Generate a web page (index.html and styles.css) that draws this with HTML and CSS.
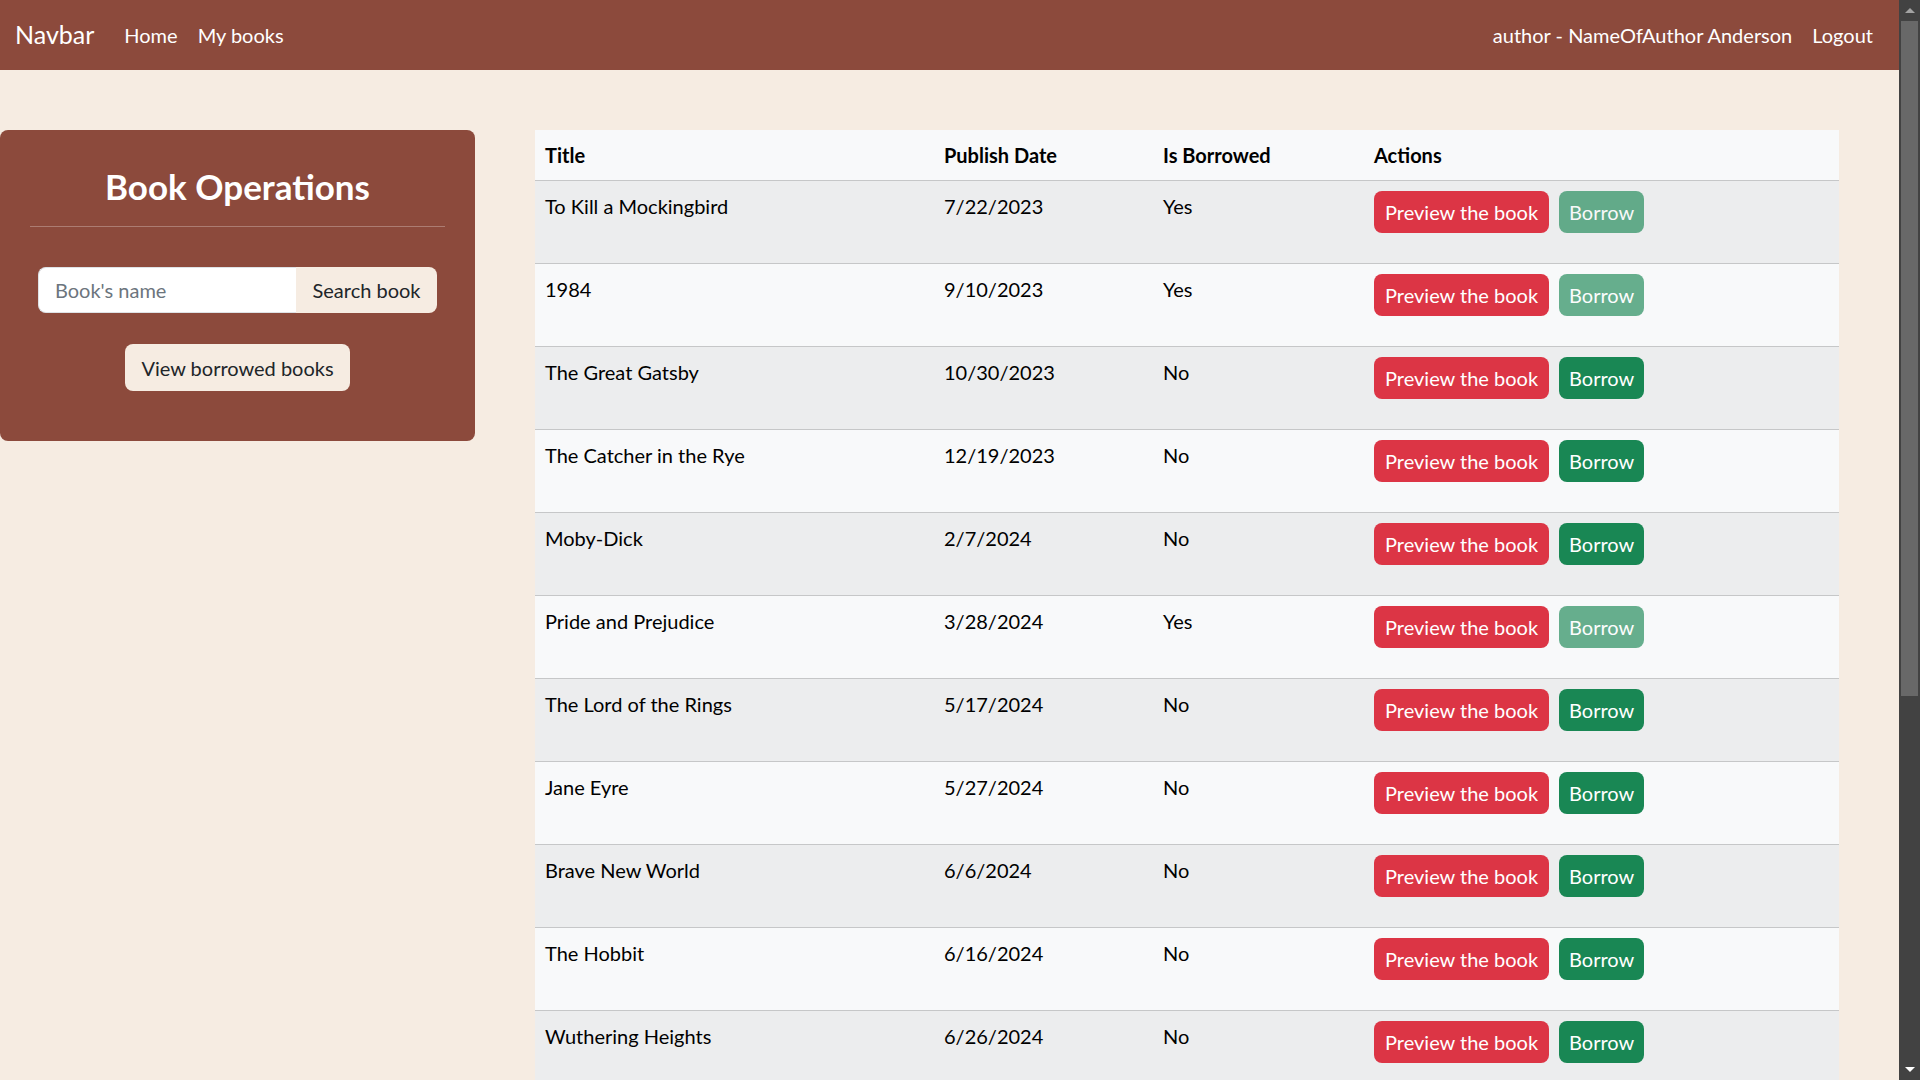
FILE: index.html
```html
<!DOCTYPE html>
<html lang="en">
<head>
<meta charset="utf-8">
<title>Books</title>
<link rel="stylesheet" href="styles.css">
</head>
<body>
<div class="page">
  <nav class="navbar">
    <a class="brand" href="#">Navbar</a>
    <ul class="nav-left">
      <li><a class="nav-link" href="#">Home</a></li>
      <li><a class="nav-link" href="#">My books</a></li>
    </ul>
    <ul class="nav-right">
      <li><span class="nav-link">author - NameOfAuthor Anderson</span></li>
      <li><a class="nav-link" href="#">Logout</a></li>
    </ul>
  </nav>
  <main class="layout">
    <aside class="side">
      <div class="ops-card">
        <h3 class="ops-title">Book Operations</h3>
        <hr class="ops-rule">
        <form class="search-group">
          <input class="search-input" type="text" placeholder="Book's name">
          <button class="search-btn" type="button">Search book</button>
        </form>
        <div class="center-row">
          <button class="light-btn" type="button">View borrowed books</button>
        </div>
      </div>
    </aside>
    <section class="content">
      <table class="books">
        <thead>
          <tr>
            <th class="c-title">Title</th>
            <th class="c-date">Publish Date</th>
            <th class="c-borrowed">Is Borrowed</th>
            <th class="c-actions">Actions</th>
          </tr>
        </thead>
        <tbody>
          <tr><td>To Kill a Mockingbird</td><td>7/22/2023</td><td>Yes</td><td><div class="actions"><button class="btn btn-danger">Preview the book</button><button class="btn btn-success" disabled>Borrow</button></div></td></tr>
          <tr><td>1984</td><td>9/10/2023</td><td>Yes</td><td><div class="actions"><button class="btn btn-danger">Preview the book</button><button class="btn btn-success" disabled>Borrow</button></div></td></tr>
          <tr><td>The Great Gatsby</td><td>10/30/2023</td><td>No</td><td><div class="actions"><button class="btn btn-danger">Preview the book</button><button class="btn btn-success">Borrow</button></div></td></tr>
          <tr><td>The Catcher in the Rye</td><td>12/19/2023</td><td>No</td><td><div class="actions"><button class="btn btn-danger">Preview the book</button><button class="btn btn-success">Borrow</button></div></td></tr>
          <tr><td>Moby-Dick</td><td>2/7/2024</td><td>No</td><td><div class="actions"><button class="btn btn-danger">Preview the book</button><button class="btn btn-success">Borrow</button></div></td></tr>
          <tr><td>Pride and Prejudice</td><td>3/28/2024</td><td>Yes</td><td><div class="actions"><button class="btn btn-danger">Preview the book</button><button class="btn btn-success" disabled>Borrow</button></div></td></tr>
          <tr><td>The Lord of the Rings</td><td>5/17/2024</td><td>No</td><td><div class="actions"><button class="btn btn-danger">Preview the book</button><button class="btn btn-success">Borrow</button></div></td></tr>
          <tr><td>Jane Eyre</td><td>5/27/2024</td><td>No</td><td><div class="actions"><button class="btn btn-danger">Preview the book</button><button class="btn btn-success">Borrow</button></div></td></tr>
          <tr><td>Brave New World</td><td>6/6/2024</td><td>No</td><td><div class="actions"><button class="btn btn-danger">Preview the book</button><button class="btn btn-success">Borrow</button></div></td></tr>
          <tr><td>The Hobbit</td><td>6/16/2024</td><td>No</td><td><div class="actions"><button class="btn btn-danger">Preview the book</button><button class="btn btn-success">Borrow</button></div></td></tr>
          <tr><td>Wuthering Heights</td><td>6/26/2024</td><td>No</td><td><div class="actions"><button class="btn btn-danger">Preview the book</button><button class="btn btn-success">Borrow</button></div></td></tr>
        </tbody>
      </table>
    </section>
  </main>
</div>
<div class="scrollbar" aria-hidden="true">
  <div class="sb-btn"><span class="arrow-up"></span></div>
  <div class="sb-track"><div class="sb-thumb"></div></div>
  <div class="sb-btn"><span class="arrow-down"></span></div>
</div>
</body>
</html>
```
FILE: styles.css
```css
* { box-sizing: border-box; }

html, body {
  height: 100%;
}

body {
  margin: 0;
  display: flex;
  overflow: hidden;
  font-family: "Lato", "Liberation Sans", sans-serif;
  font-size: 20px;
  line-height: 1.5;
  color: #212529;
  background: #f6ece2;
}

.page {
  flex: 1;
  min-width: 0;
  height: 100%;
  overflow: hidden;
  display: flex;
  flex-direction: column;
}

/* FAKE WINDOW SCROLLBAR */
.scrollbar {
  flex: 0 0 21px;
  width: 21px;
  height: 100%;
  background: #424242;
  display: flex;
  flex-direction: column;
}
.sb-btn {
  height: 21px;
  flex: 0 0 21px;
  display: flex;
  align-items: center;
  justify-content: center;
}
.arrow-up {
  width: 0;
  height: 0;
  border-left: 5px solid transparent;
  border-right: 5px solid transparent;
  border-bottom: 5px solid #a3a3a3;
}
.arrow-down {
  width: 0;
  height: 0;
  border-left: 5px solid transparent;
  border-right: 5px solid transparent;
  border-top: 5px solid #ffffff;
}
.sb-track {
  flex: 1;
  padding: 0 2px;
}
.sb-thumb {
  height: 675px;
  background: #686868;
}

/* NAVBAR */
.navbar {
  flex: 0 0 70px;
  height: 70px;
  background: #8c4a3c;
  display: flex;
  align-items: center;
  padding: 0 16px 0 15px;
}
.brand {
  font-size: 25px;
  color: #fff;
  text-decoration: none;
  margin-right: 20px;
  line-height: 1.5;
}
.nav-left, .nav-right {
  display: flex;
  list-style: none;
  margin: 0;
  padding: 0;
}
.nav-right {
  margin-left: auto;
}
.nav-link {
  display: block;
  padding: 0 10px;
  color: #fff;
  text-decoration: none;
  font-size: 20px;
}

/* LAYOUT */
.layout {
  display: flex;
  align-items: flex-start;
}
.side {
  width: 475px;
  flex: 0 0 475px;
  padding-top: 60px;
}
.content {
  flex: 1;
  padding: 60px 60px 69px 60px;
}

/* OPERATIONS CARD */
.ops-card {
  background: #8c4a3c;
  border-radius: 8px;
  padding: 35px 30px 50px;
  color: #fff;
}
.ops-title {
  margin: 0;
  font-size: 35px;
  font-weight: 700;
  line-height: 42px;
  text-align: center;
}
.ops-rule {
  margin: 19px 0 40px;
  border: 0;
  border-top: 1px solid rgba(255, 255, 255, 0.28);
}
.search-group {
  display: flex;
  margin: 0 8px 31px;
  height: 46px;
}
.search-input {
  flex: 1;
  min-width: 0;
  border: 1px solid #dee2e6;
  border-right: 0;
  border-radius: 8px 0 0 8px;
  padding: 0 16px;
  font: inherit;
  font-size: 20px;
  color: #212529;
  background: #fff;
  outline: none;
}
.search-input::placeholder {
  color: #6c757d;
}
.search-btn {
  width: 141px;
  border: 0;
  border-radius: 0 8px 8px 0;
  background: #f6ece2;
  color: #212529;
  font: inherit;
  font-size: 20px;
  padding: 0;
}
.center-row {
  display: flex;
  justify-content: center;
}
.light-btn {
  height: 47px;
  width: 225px;
  border: 0;
  border-radius: 8px;
  background: #f6ece2;
  color: #212529;
  font: inherit;
  font-size: 20px;
  padding: 0;
}

/* TABLE */
.books {
  width: 100%;
  border-collapse: collapse;
  color: #000;
  background: #f8f9fa;
}
.books th {
  text-align: left;
  font-weight: 700;
  padding: 10px 10px;
  height: 50px;
  border-bottom: 1px solid #c6c7c8;
  vertical-align: top;
}
.c-title { width: 399px; }
.c-date { width: 219px; }
.c-borrowed { width: 211px; }
.books td {
  padding: 10px 10px 30px;
  height: 83px;
  border-bottom: 1px solid #c6c7c8;
  vertical-align: top;
}
.books tbody tr:nth-child(odd) {
  background: #ecedee;
}
.actions {
  display: flex;
  gap: 10px;
}
.btn {
  height: 42px;
  padding: 0 11px;
  border: 0;
  border-radius: 8px;
  font: inherit;
  font-size: 20px;
  line-height: 42px;
  color: #fff;
  cursor: pointer;
}
.btn-success {
  padding: 0 10px;
}
.btn-danger {
  background: #dc3545;
}
.btn-success {
  background: #198754;
}
.btn-success:disabled {
  opacity: 0.65;
  cursor: default;
}
```
